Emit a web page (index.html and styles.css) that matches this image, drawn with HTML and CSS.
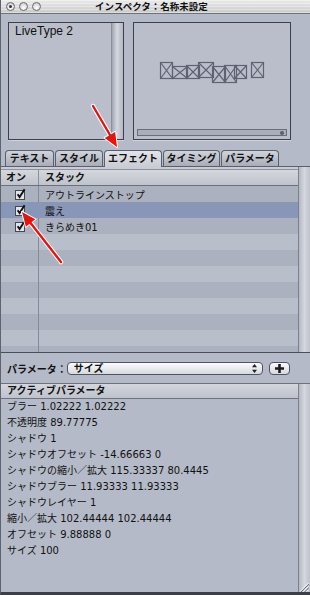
FILE: index.html
```html
<!DOCTYPE html>
<html lang="ja">
<head>
    <meta charset="UTF-8">
    <title>インスペクタ：名称未設定</title>
    <link rel="stylesheet" href="styles.css">
</head>
<body>
    <div class="window">
        <div class="titlebar">
            <div class="lights">
                <span class="light dot"></span>
                <span class="light"></span>
                <span class="light"></span>
            </div>
            <div class="title">インスペクタ：名称未設定</div>
            <div></div>
        </div>

        <div class="preview">
            <div class="text-box">
                <div class="text-area">LiveType 2</div>
                <div class="text-scroll"></div>
            </div>
            <div class="canvas-box">
                <svg class="glyphs" width="156" height="106" viewBox="0 0 156 106">
                    <g fill="none" stroke="#5f6371" stroke-width="1.2">
                        <rect x="26.5" y="39.5" width="12" height="16"/><path d="M26.5 39.5L38.5 55.5M38.5 39.5L26.5 55.5"/>
                        <rect x="38.5" y="43.5" width="15" height="12"/><path d="M38.5 43.5L53.5 55.5M53.5 43.5L38.5 55.5"/>
                        <rect x="52.5" y="42.5" width="13" height="13"/><path d="M52.5 42.5L65.5 55.5M65.5 42.5L52.5 55.5"/>
                        <rect x="64.5" y="39.5" width="15" height="15"/><path d="M64.5 39.5L79.5 54.5M79.5 39.5L64.5 54.5"/>
                        <rect x="78.5" y="43.5" width="13" height="16"/><path d="M78.5 43.5L91.5 59.5M91.5 43.5L78.5 59.5"/>
                        <rect x="90.5" y="42.5" width="12" height="17"/><path d="M90.5 42.5L102.5 59.5M102.5 42.5L90.5 59.5"/>
                        <rect x="100.5" y="42.5" width="12" height="13"/><path d="M100.5 42.5L112.5 55.5M112.5 42.5L100.5 55.5"/>
                        <rect x="117.5" y="39.5" width="12" height="15"/><path d="M117.5 39.5L129.5 54.5M129.5 39.5L117.5 54.5"/>
                    </g>
                </svg>
                <div class="timeline"><span class="knob"></span></div>
            </div>
        </div>

        <div class="tabs">
            <div class="tab t-text">テキスト</div>
            <div class="tab t-style">スタイル</div>
            <div class="tab t-effect current">エフェクト</div>
            <div class="tab t-timing">タイミング</div>
            <div class="tab t-param">パラメータ</div>
        </div>

        <div class="list">
            <div class="list-main">
                <div class="list-head">
                    <span class="col-on">オン</span>
                    <span class="col-name">スタック</span>
                </div>
                <div class="list-body">
                    <div class="row">
                        <span class="cell-on">
                            <svg class="check" width="12" height="12" viewBox="0 0 12 12"><rect x="1.5" y="2.5" width="9" height="9" fill="#e2e4e9" stroke="#454850"/><path d="M3.6 6.2L5.6 9L10.6 1.2" fill="none" stroke="#111" stroke-width="1.9"/></svg>
                        </span>
                        <span class="cell-name">アウトラインストップ</span>
                    </div>
                    <div class="row selected">
                        <span class="cell-on">
                            <svg class="check" width="12" height="12" viewBox="0 0 12 12"><rect x="1.5" y="2.5" width="9" height="9" fill="#e2e4e9" stroke="#454850"/><path d="M3.6 6.2L5.6 9L10.6 1.2" fill="none" stroke="#111" stroke-width="1.9"/></svg>
                        </span>
                        <span class="cell-name">震え</span>
                    </div>
                    <div class="row">
                        <span class="cell-on">
                            <svg class="check" width="12" height="12" viewBox="0 0 12 12"><rect x="1.5" y="2.5" width="9" height="9" fill="#e2e4e9" stroke="#454850"/><path d="M3.6 6.2L5.6 9L10.6 1.2" fill="none" stroke="#111" stroke-width="1.9"/></svg>
                        </span>
                        <span class="cell-name">きらめき01</span>
                    </div>
                </div>
            </div>
            <div class="scroll-track"></div>
        </div>

        <div class="param-bar">
            <span class="param-label">パラメータ：</span>
            <div class="popup">
                <span>サイズ</span>
                <svg width="5" height="9" viewBox="0 0 5 9"><path d="M2.5 0L5 3.2H0zM2.5 9L5 5.8H0z" fill="#222"/></svg>
            </div>
            <button class="add-btn">
                <svg width="9" height="9" viewBox="0 0 9 9"><path d="M3.2 0h2.6v3.2H9v2.6H5.8V9H3.2V5.8H0V3.2h3.2z" fill="#1c1c1c"/></svg>
            </button>
        </div>

        <div class="active-panel">
            <div class="active-main">
                <div class="active-head">アクティブパラメータ</div>
                <ul class="values">
                    <li>ブラー 1.02222 1.02222</li>
                    <li>不透明度 89.77775</li>
                    <li>シャドウ 1</li>
                    <li>シャドウオフセット -14.66663 0</li>
                    <li>シャドウの縮小／拡大 115.33337 80.4445</li>
                    <li>シャドウブラー 11.93333 11.93333</li>
                    <li>シャドウレイヤー 1</li>
                    <li>縮小／拡大 102.44444 102.44444</li>
                    <li>オフセット 9.88888 0</li>
                    <li>サイズ 100</li>
                </ul>
            </div>
            <div class="scroll-track"></div>
            <svg class="grip" width="10" height="10" viewBox="0 0 10 10">
                <path d="M9.5 1L1 9.5M9.5 4.5L4.5 9.5M9.5 8L8 9.5" stroke="#f4f5f7" stroke-width="1"/>
                <path d="M10 2L2 10M10 5.5L5.5 10" stroke="#6d717b" stroke-width="1"/>
            </svg>
        </div>
    </div>

    <!-- red callout arrows -->
    <svg class="pointers" width="310" height="595" viewBox="0 0 310 595">
        <g stroke="#fff" stroke-width="4.5" stroke-linecap="round" fill="#fff" stroke-linejoin="round">
            <line x1="93" y1="106" x2="110" y2="135"/>
            <polygon points="117,147 104.7,137.9 115.1,131.9" stroke-width="2"/>
            <line x1="61" y1="262" x2="30.6" y2="223"/>
            <polygon points="22,212 35.3,219.3 25.9,226.7" stroke-width="2"/>
        </g>
        <g stroke="#e3150f" stroke-width="2.4" stroke-linecap="round" fill="#e3150f">
            <line x1="93" y1="106" x2="110" y2="135"/>
            <polygon points="117,147 104.7,137.9 115.1,131.9" stroke="none"/>
            <line x1="61" y1="262" x2="30.6" y2="223"/>
            <polygon points="22,212 35.3,219.3 25.9,226.7" stroke="none"/>
        </g>
    </svg>
</body>
</html>
```

FILE: styles.css
```css
* {
    box-sizing: border-box;
}
body {
    margin: 0;
    position: relative;
    font-family: "DejaVu Sans", "Noto Sans CJK JP", sans-serif;
    font-size: 10px;
    color: #111;
    background: #b5bac8;
}
.window {
    width: 310px;
    height: 595px;
    display: flex;
    flex-direction: column;
    background: #b5bac8;
    border-left: 1px solid #5f636d;
    border-bottom: 3px solid #3c3f47;
    overflow: hidden;
}

/* title bar */
.titlebar {
    height: 14px;
    flex-shrink: 0;
    display: grid;
    grid-template-columns: 1fr auto 1fr;
    align-items: center;
    border-bottom: 1px solid #6f727a;
    background:
        repeating-linear-gradient(rgba(255, 255, 255, 0.35) 0 1px, transparent 1px 3px),
        linear-gradient(#ebebeb, #c9c9c9);
}
.lights {
    display: flex;
    gap: 4px;
    padding-left: 5px;
}
.light {
    width: 9px;
    height: 9px;
    border-radius: 50%;
    border: 1px solid #6c6c6c;
    background: radial-gradient(circle at 50% 70%, #ffffff, #c4c4c4);
    display: flex;
    align-items: center;
    justify-content: center;
}
.light.dot::after {
    content: "";
    width: 3px;
    height: 3px;
    border-radius: 50%;
    background: #333;
}
.title {
    font-weight: bold;
    font-size: 9.5px;
    line-height: 13px;
    padding-right: 8px;
}

/* preview boxes */
.preview {
    display: flex;
    gap: 9px;
    height: 136px;
    flex-shrink: 0;
    padding: 8px 0 0 7px;
}
.text-box {
    width: 116px;
    height: 118px;
    display: flex;
    border: 1px solid #3d4049;
    background: #b9beca;
    box-shadow: 0 1px 0 #cfd2d9;
}
.text-area {
    flex: 1;
    padding: 1px 6px;
    font-family: "Liberation Sans", sans-serif;
    font-size: 12px;
    line-height: 14px;
}
.text-scroll {
    width: 12px;
    border-left: 1px solid #8a8f9a;
    background: linear-gradient(to right, #a1a6b2, #d4d7de 45%, #b2b7c2);
}
.canvas-box {
    width: 158px;
    height: 118px;
    display: flex;
    flex-direction: column;
    border: 1px solid #3d4049;
    background: #b9beca;
    box-shadow: 0 1px 0 #cfd2d9;
}
.glyphs {
    display: block;
}
.timeline {
    height: 7px;
    margin: 0 3px 3px;
    border: 1px solid #6a6e79;
    background: #a9aeba;
    display: flex;
    justify-content: flex-end;
    align-items: center;
    padding-right: 2px;
}
.knob {
    width: 4px;
    height: 4px;
    border-radius: 50%;
    background: #5a5e68;
}

/* tabs */
.tabs {
    display: flex;
    gap: 1px;
    height: 16px;
    flex-shrink: 0;
    padding-left: 4px;
    align-items: flex-end;
}
.tab {
    height: 16px;
    border: 1px solid #5c606a;
    border-bottom: none;
    border-radius: 4px 4px 0 0;
    background: linear-gradient(#d0d3da, #a8adb9);
    font-weight: bold;
    text-align: center;
    line-height: 15px;
}
.tab.current {
    position: relative;
    z-index: 1;
    height: 17px;
    margin-bottom: -1px;
    background: linear-gradient(#e2e4e9, #c9ccd4);
}
.t-text { width: 49px; }
.t-style { width: 48px; }
.t-effect { width: 58px; }
.t-timing { width: 57px; }
.t-param { width: 58px; }

/* effect stack list */
.list {
    display: flex;
    height: 187px;
    flex-shrink: 0;
    border-top: 1px solid #5c606a;
    border-bottom: 1px solid #4a4e57;
}
.list-main {
    flex: 1;
    display: flex;
    flex-direction: column;
    padding-top: 2px;
    background: #c9ccd4;
}
.list-head {
    display: flex;
    height: 17px;
    border-top: 1px solid #8e929c;
    border-bottom: 1px solid #6c707a;
    background: linear-gradient(#d4d7dd, #bfc3cc);
    font-weight: bold;
    line-height: 15px;
}
.col-on {
    width: 38px;
    padding-left: 5px;
    border-right: 1px solid #8a8e98;
}
.col-name {
    padding-left: 6px;
}
.list-body {
    flex: 1;
    background:
        linear-gradient(to right, transparent 37px, #868a95 37px, #868a95 38px, transparent 38px),
        repeating-linear-gradient(#abb1be 0 16px, #b9becb 16px 32px);
}
.row {
    display: flex;
    height: 16px;
    align-items: center;
}
.row.selected {
    background: #8897b7;
}
.cell-on {
    width: 38px;
    display: flex;
    justify-content: center;
}
.check {
    display: block;
}
.cell-name {
    padding-left: 6px;
}
.scroll-track {
    width: 12px;
    flex-shrink: 0;
    border-left: 1px solid #7c808a;
    background: linear-gradient(to right, #b3b8c3, #d5d8de 50%, #bcc0ca);
}

/* parameter picker */
.param-bar {
    height: 30px;
    flex-shrink: 0;
    display: flex;
    align-items: center;
    padding-left: 6px;
}
.param-label {
    font-weight: bold;
}
.popup {
    width: 196px;
    height: 13px;
    border: 1px solid #50545d;
    border-radius: 4px;
    background: linear-gradient(#fbfbfc, #d6d9df);
    display: flex;
    align-items: center;
    justify-content: space-between;
    padding: 0 5px 0 6px;
    font-weight: bold;
    line-height: 11px;
}
.add-btn {
    width: 21px;
    height: 13px;
    margin-left: 6px;
    padding: 0;
    border: 1px solid #50545d;
    border-radius: 4px;
    background: linear-gradient(#fbfbfc, #d6d9df);
    display: flex;
    align-items: center;
    justify-content: center;
}

/* active parameters */
.active-panel {
    flex: 1;
    display: flex;
    position: relative;
    border-top: 1px solid #6e727c;
}
.active-main {
    flex: 1;
    display: flex;
    flex-direction: column;
}
.active-head {
    height: 15px;
    border-bottom: 1px solid #6e727c;
    background: linear-gradient(#d3d6dc, #bec2cb);
    font-weight: bold;
    padding-left: 6px;
    line-height: 14px;
}
.values {
    list-style: none;
    margin: 0;
    padding: 0 0 0 6px;
    line-height: 16px;
    white-space: nowrap;
}
.grip {
    position: absolute;
    right: 1px;
    bottom: 0;
}

.pointers {
    position: absolute;
    left: 0;
    top: 0;
    pointer-events: none;
}
```
